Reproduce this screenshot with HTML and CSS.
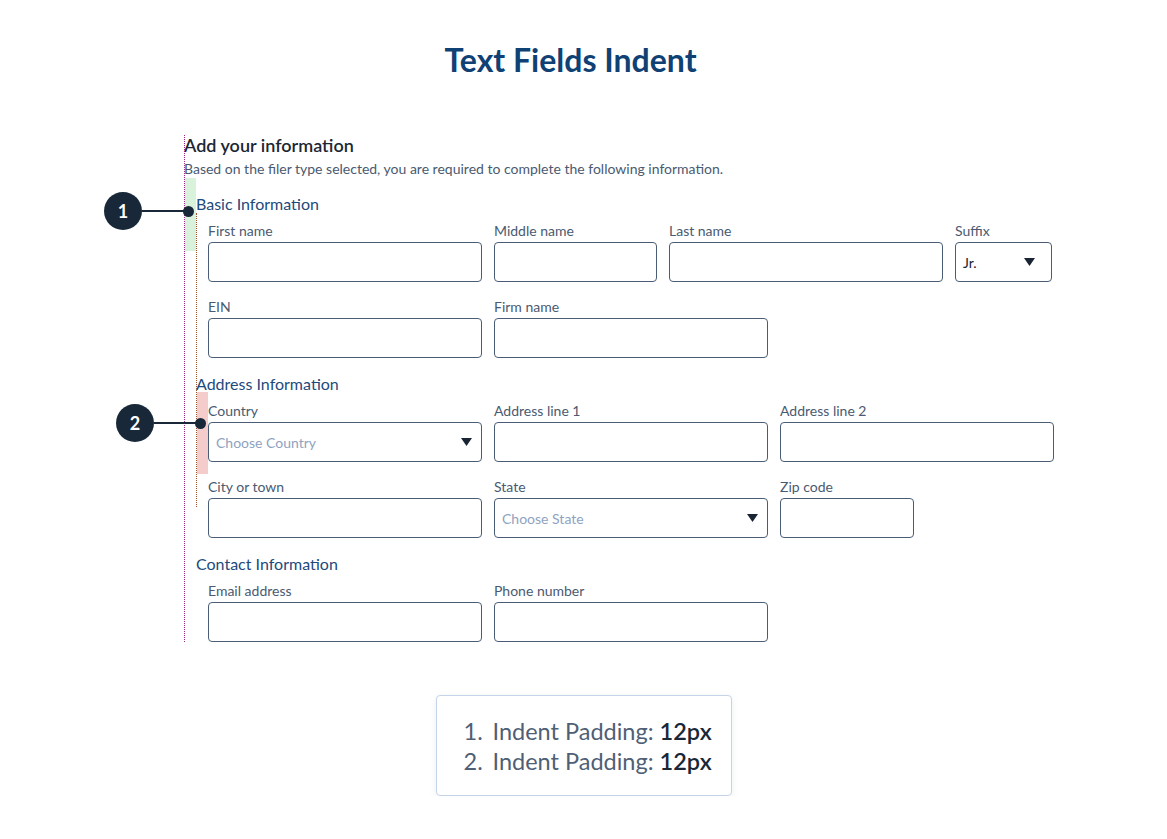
FILE: index.html
```html
<!DOCTYPE html>
<html lang="en">

<head>
    <meta charset="UTF-8">
    <meta name="viewport" content="width=device-width, initial-scale=1.0">
    <title>Text Fields Indent</title>
    <link rel="stylesheet" href="styles.css">
</head>

<body>
    <h1 class="page-title">Text Fields Indent</h1>

    <div class="form-wrap">
        <!-- annotation overlays -->
        <div class="guide-purple"></div>
        <div class="guide-brown"></div>
        <div class="hl-green"></div>
        <div class="hl-pink"></div>
        <div class="marker marker-1"><span class="marker-num">1</span><span class="marker-line"></span><span class="marker-dot"></span></div>
        <div class="marker marker-2"><span class="marker-num">2</span><span class="marker-line"></span><span class="marker-dot"></span></div>

        <h2 class="form-title">Add your information</h2>
        <p class="form-sub">Based on the filer type selected, you are required to complete the following information.</p>

        <!-- Basic Information -->
        <div class="section">
            <h3 class="section-title">Basic Information</h3>
            <div class="fields">
                <div class="field w-274"><label>First name</label><div class="box"></div></div>
                <div class="field w-163"><label>Middle name</label><div class="box"></div></div>
                <div class="field w-274"><label>Last name</label><div class="box"></div></div>
                <div class="field w-97"><label>Suffix</label>
                    <div class="box select suffix"><span class="value">Jr.</span>
                        <svg class="caret" width="11" height="8" viewBox="0 0 11 8"><path d="M0 0H11L5.5 8Z" fill="#1a2533"/></svg>
                    </div>
                </div>
            </div>
            <div class="fields">
                <div class="field w-274"><label>EIN</label><div class="box"></div></div>
                <div class="field w-274"><label>Firm name</label><div class="box"></div></div>
            </div>
        </div>

        <!-- Address Information -->
        <div class="section">
            <h3 class="section-title">Address Information</h3>
            <div class="fields">
                <div class="field w-274"><label>Country</label>
                    <div class="box select"><span class="placeholder">Choose Country</span>
                        <svg class="caret" width="11" height="8" viewBox="0 0 11 8"><path d="M0 0H11L5.5 8Z" fill="#1a2533"/></svg>
                    </div>
                </div>
                <div class="field w-274"><label>Address line 1</label><div class="box"></div></div>
                <div class="field w-274"><label>Address line 2</label><div class="box"></div></div>
            </div>
            <div class="fields">
                <div class="field w-274"><label>City or town</label><div class="box"></div></div>
                <div class="field w-274"><label>State</label>
                    <div class="box select"><span class="placeholder">Choose State</span>
                        <svg class="caret" width="11" height="8" viewBox="0 0 11 8"><path d="M0 0H11L5.5 8Z" fill="#1a2533"/></svg>
                    </div>
                </div>
                <div class="field w-134"><label>Zip code</label><div class="box"></div></div>
            </div>
        </div>

        <!-- Contact Information -->
        <div class="section">
            <h3 class="section-title">Contact Information</h3>
            <div class="fields">
                <div class="field w-274"><label>Email address</label><div class="box"></div></div>
                <div class="field w-274"><label>Phone number</label><div class="box"></div></div>
            </div>
        </div>
    </div>

    <div class="legend">
        <div class="legend-row"><span class="num">1.</span>Indent Padding: <b>12px</b></div>
        <div class="legend-row"><span class="num">2.</span>Indent Padding: <b>12px</b></div>
    </div>
</body>

</html>
```

FILE: styles.css
```css
body {
    margin: 0;
    font-family: Lato, "Noto Sans", sans-serif;
    background-color: #ffffff;
    color: #475569;
}

.page-title {
    margin: 0;
    padding-top: 41px;
    height: 38px;
    line-height: 38px;
    text-align: center;
    font-size: 32px;
    font-weight: 700;
    color: #0f4174;
    padding-right: 26px;
}

/* Form block */
.form-wrap {
    position: relative;
    margin: 55px 0 0 184px;
    width: 870px;
}

.form-title {
    margin: 0;
    font-size: 18px;
    line-height: 22px;
    font-weight: 600;
    color: #1c2733;
}

.form-sub {
    margin: 4px 0 0;
    font-size: 14px;
    line-height: 18px;
    color: #4a5a70;
}

.section {
    margin-top: 16px;
    padding-left: 12px;
}

.section-title {
    margin: 0 0 8px;
    font-size: 16px;
    line-height: 20px;
    font-weight: 400;
    color: #1d4a7c;
}

.fields {
    display: flex;
    gap: 12px;
    padding-left: 12px;
}

.fields + .fields {
    margin-top: 16px;
}

.field label {
    display: block;
    font-size: 14px;
    line-height: 18px;
    margin-bottom: 2px;
    color: #4a5a70;
}

.box {
    box-sizing: border-box;
    height: 40px;
    border: 1px solid #4a5d75;
    border-radius: 4px;
    background: #fff;
}

.box.select {
    display: flex;
    align-items: center;
    justify-content: space-between;
    padding: 0 9px 0 7px;
    font-size: 14px;
}

.box.select.suffix {
    padding-right: 16px;
}

.box .value {
    color: #1a2533;
}

.box .placeholder {
    color: #8fa3bf;
}

.w-274 { width: 274px; }
.w-163 { width: 163px; }
.w-97 { width: 97px; }
.w-134 { width: 134px; }

/* Annotations */
.guide-purple {
    position: absolute;
    left: 0;
    top: 1px;
    bottom: 0;
    border-left: 1px dotted #a0208e;
}

.guide-brown {
    position: absolute;
    left: 12px;
    top: 79px;
    height: 294px;
    border-left: 1px dotted #a0522d;
}

.hl-green {
    position: absolute;
    left: 1px;
    top: 44px;
    width: 11px;
    height: 73px;
    background: #d9f2dc;
}

.hl-pink {
    position: absolute;
    left: 13px;
    top: 258px;
    width: 11px;
    height: 82px;
    background: #f5cccc;
}

.marker {
    position: absolute;
    display: flex;
    align-items: center;
}

.marker-1 { left: -80px; top: 58px; }
.marker-2 { left: -68px; top: 270px; }

.marker-num {
    width: 38px;
    height: 38px;
    border-radius: 50%;
    background: #182838;
    color: #fff;
    font-size: 18px;
    font-weight: 700;
    display: flex;
    align-items: center;
    justify-content: center;
}

.marker-line {
    width: 44px;
    height: 2px;
    background: #182838;
}

.marker-dot {
    width: 11px;
    height: 11px;
    border-radius: 50%;
    background: #182838;
    margin-left: -3px;
}

/* Legend */
.legend {
    box-sizing: border-box;
    width: 296px;
    margin: 53px auto 0;
    padding: 20px 0 19px 27px;
    border: 1px solid #c5d3e8;
    border-radius: 4px;
    box-shadow: 0 2px 6px rgba(100, 116, 139, 0.12);
    font-size: 23.5px;
    line-height: 30px;
    color: #4f5f75;
}

.legend .num {
    display: inline-block;
    width: 29px;
}

.legend b {
    color: #182838;
    font-weight: 600;
}
```
